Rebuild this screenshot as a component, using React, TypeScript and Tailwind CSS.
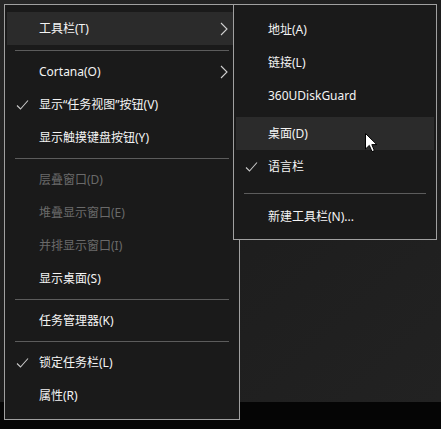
import React from 'react';

type Entry =
  | { kind: 'item'; label: string; checked?: boolean; disabled?: boolean; sub?: boolean; hover?: boolean }
  | { kind: 'sep'; first?: boolean };

const mainMenu: Entry[] = [
  { kind: 'item', label: '工具栏(T)', sub: true, hover: true },
  { kind: 'sep', first: true },
  { kind: 'item', label: 'Cortana(O)', sub: true },
  { kind: 'item', label: '显示“任务视图”按钮(V)', checked: true },
  { kind: 'item', label: '显示触摸键盘按钮(Y)' },
  { kind: 'sep' },
  { kind: 'item', label: '层叠窗口(D)', disabled: true },
  { kind: 'item', label: '堆叠显示窗口(E)', disabled: true },
  { kind: 'item', label: '并排显示窗口(I)', disabled: true },
  { kind: 'item', label: '显示桌面(S)' },
  { kind: 'sep' },
  { kind: 'item', label: '任务管理器(K)' },
  { kind: 'sep' },
  { kind: 'item', label: '锁定任务栏(L)', checked: true },
  { kind: 'item', label: '属性(R)' },
];

const Check = () => (
  <svg width="13" height="11" viewBox="0 0 13 11" className="absolute left-[9px] top-1/2 -translate-y-1/2">
    <polyline points="1,6 4.5,9.5 12,1" fill="none" stroke="#c8c8c8" strokeWidth="1.1" />
  </svg>
);

const Chevron = () => (
  <svg width="8" height="14" viewBox="0 0 8 14" className="absolute right-[9px] top-1/2 -translate-y-1/2">
    <polyline points="1,1 7,7 1,13" fill="none" stroke="#d0d0d0" strokeWidth="1.1" />
  </svg>
);

const MenuItem = ({ label, checked, disabled, sub, hover }: { label: string; checked?: boolean; disabled?: boolean; sub?: boolean; hover?: boolean }) => (
  <div
    className={`relative h-[33px] flex items-center pl-[32px] text-[12px] ${hover ? 'bg-[#2b2b2b]' : ''} ${
      disabled ? 'text-[#6a6a6a]' : 'text-[#f4f4f4]'
    }`}
  >
    {checked && <Check />}
    <span>{label}</span>
    {sub && <Chevron />}
  </div>
);

const Cursor = () => (
  <svg width="13" height="20" viewBox="0 0 13 20" className="absolute left-[365px] top-[133px]">
    <path d="M0.5 0.5 L0.5 16 L4.3 12.4 L7 18.6 L9.4 17.6 L6.8 11.6 L11.8 11.6 Z" fill="#ffffff" stroke="#000000" strokeWidth="1" />
  </svg>
);

export default function App() {
  return (
    <div
      className="relative w-[441px] h-[429px] overflow-hidden flex flex-col bg-[#1e1e1e]"
      style={{ fontFamily: '"Noto Sans", "Noto Sans CJK SC", sans-serif' }}
    >
      <div className="flex-1 bg-gradient-to-br from-[#262626] via-[#1d1d1d] to-[#222222]" />
      <div className="h-[27px] bg-[#050505]" />

      {/* main context menu */}
      <div className="absolute left-[4px] top-[4px] w-[236px] border border-[#a0a0a0] bg-[#1a1a1a] px-[2px] pt-[7px] pb-[7px]">
        {mainMenu.map((e, i) =>
          e.kind === 'sep' ? (
            <div key={i} className={`${e.first ? 'pt-[5px]' : 'pt-[4px]'} pb-[4px] px-[8px]`}>
              <div className="h-px bg-[#5c5c5c]" />
            </div>
          ) : (
            <MenuItem key={i} {...e} />
          )
        )}
      </div>

      {/* toolbars submenu */}
      <div className="absolute left-[233px] top-[4px] w-[204px] border border-[#a0a0a0] bg-[#1a1a1a] px-[2px] pt-[8px] pb-[6px]">
        <MenuItem label="地址(A)" />
        <MenuItem label="链接(L)" />
        <MenuItem label="360UDiskGuard" />
        <div className="h-[5px]" />
        <MenuItem label="桌面(D)" hover />
        <MenuItem label="语言栏" checked />
        <div className="pt-[10px] pb-[6px] px-[8px]">
          <div className="h-px bg-[#5c5c5c]" />
        </div>
        <MenuItem label="新建工具栏(N)..." />
      </div>

      <Cursor />
    </div>
  );
}
